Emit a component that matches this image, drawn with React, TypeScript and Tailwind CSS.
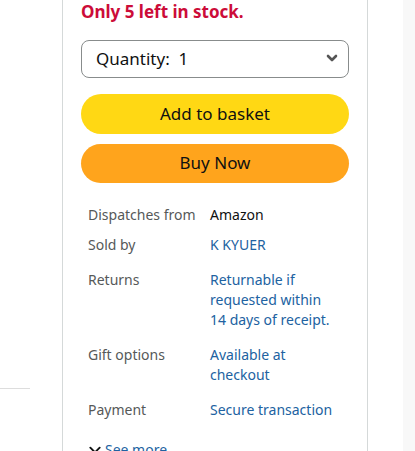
import React from "react";

type Row = {
  label: string;
  value: string;
  link?: boolean;
  gap: string;
};

const rows: Row[] = [
  { label: "Dispatches from", value: "Amazon", gap: "mt-[22px]" },
  { label: "Sold by", value: "K KYUER", link: true, gap: "mt-[10px]" },
  { label: "Returns", value: "Returnable if requested within 14 days of receipt.", link: true, gap: "mt-[15px]" },
  { label: "Gift options", value: "Available at checkout", link: true, gap: "mt-[15px]" },
  { label: "Payment", value: "Secure transaction", link: true, gap: "mt-[15px]" },
];

function Chevron({ className, width = 2.2 }: { className?: string; width?: number }) {
  return (
    <svg viewBox="0 0 12 8" className={className} fill="none" stroke="currentColor" strokeWidth={width} strokeLinecap="round" strokeLinejoin="round">
      <path d="M2 2l4 4 4-4" />
    </svg>
  );
}

export default function App() {
  return (
    <div
      className="flex h-[451px] w-[415px] overflow-hidden bg-white text-[#0F1111]"
      style={{ fontFamily: '"Noto Sans", Arial, sans-serif' }}
    >
      <div className="w-[30px] shrink-0 pt-[388px]">
        <div className="h-px bg-[#dddddd]" />
      </div>

      <div className="ml-[32px] w-[306px] shrink-0 border-x border-[#d5d9d9] px-[18px]">
        <p className="text-[17px] font-bold leading-[24px] text-[#CC0C39]">Only 5 left in stock.</p>

        <div className="mt-[16px] flex h-[38px] items-center justify-between rounded-[8px] border border-[#888c8c] bg-white pb-[2px] pl-[14px] pr-[10px]">
          <span className="text-[17px] leading-none">Quantity:&nbsp; 1</span>
          <Chevron className="h-[8px] w-[12px] text-[#555]" width={2.6} />
        </div>

        <button className="mt-[16px] flex h-[40px] w-full items-center justify-center rounded-full bg-[#FFD814] pb-[1px] text-[17px] text-[#0F1111]">
          Add to basket
        </button>
        <button className="mt-[10px] flex h-[39px] w-full items-center justify-center rounded-full bg-[#FFA41C] pb-[1px] text-[17px] text-[#0F1111]">
          Buy Now
        </button>

        <div className="pl-[7px] text-[14px] leading-[20px]">
          {rows.map((r) => (
            <div key={r.label} className={`flex ${r.gap}`}>
              <div className="w-[122px] shrink-0 text-[#565959]">{r.label}</div>
              <div className={`w-[130px] ${r.link ? "text-[#2162A1]" : "text-[#0F1111]"}`}>{r.value}</div>
            </div>
          ))}
          <div className="mt-[20px] flex items-center gap-[3px] text-[#2162A1]">
            <Chevron className="h-[10px] w-[14px] text-[#0F1111]" width={1.6} />
            <span>See more</span>
          </div>
        </div>
      </div>

      <div className="flex-1" />
      <div className="w-[12px] shrink-0 bg-[#f8f8f8]" />
    </div>
  );
}
